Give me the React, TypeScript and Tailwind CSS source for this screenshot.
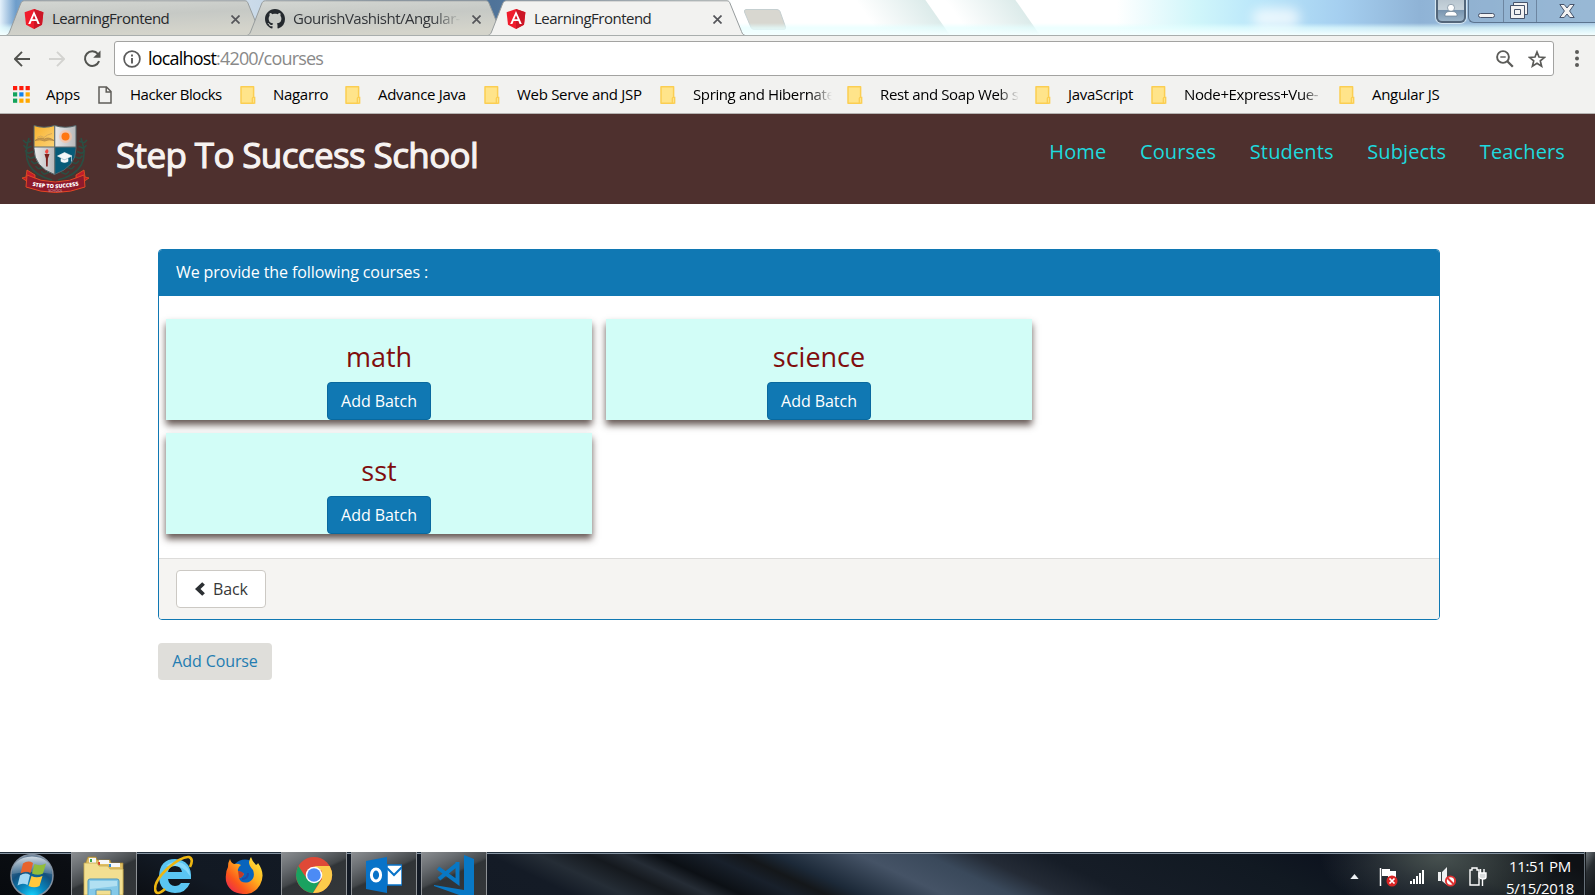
import React from "react";

const AngularIcon = () => (
  <svg className="h-5 w-5 shrink-0" viewBox="0 0 20 20">
    <path d="M10 0 19.4 3.3 18 15.8 10 20 2 15.8.6 3.3Z" fill="#f01c2c" />
    <path d="M10 0 19.4 3.3 18 15.8 10 20Z" fill="#cc1626" />
    <path d="M10 2 4.2 15h2.2l1.2-3h4.8l1.2 3h2.2Zm0 4.3 1.7 4H8.3Z" fill="#fff" fillRule="evenodd" />
  </svg>
);

const GithubIcon = () => (
  <svg className="h-5 w-5 shrink-0" viewBox="0 0 16 16" fill="#24292e">
    <path d="M8 0C3.58 0 0 3.58 0 8c0 3.54 2.29 6.53 5.47 7.59.4.07.55-.17.55-.38 0-.19-.01-.82-.01-1.49-2.01.37-2.53-.49-2.69-.94-.09-.23-.48-.94-.82-1.13-.28-.15-.68-.52-.01-.53.63-.01 1.08.58 1.23.82.72 1.21 1.87.87 2.33.66.07-.52.28-.87.51-1.07-1.78-.2-3.64-.89-3.64-3.95 0-.87.31-1.59.82-2.15-.08-.2-.36-1.02.08-2.12 0 0 .67-.21 2.2.82.64-.18 1.32-.27 2-.27s1.36.09 2 .27c1.53-1.04 2.2-.82 2.2-.82.44 1.1.16 1.92.08 2.12.51.56.82 1.27.82 2.15 0 3.07-1.87 3.75-3.65 3.95.29.25.54.73.54 1.48 0 1.07-.01 1.93-.01 2.2 0 .21.15.46.55.38A8.01 8.01 0 0 0 16 8c0-4.42-3.58-8-8-8Z" />
  </svg>
);

const CloseIcon = () => (
  <svg className="h-[9px] w-[9px] shrink-0" viewBox="0 0 9 9" stroke="#55565a" strokeWidth="1.7">
    <path d="M.5.5l8 8M8.5.5l-8 8" />
  </svg>
);

const FolderIcon = () => (
  <svg className="h-[18px] w-4 shrink-0" viewBox="0 0 16 18">
    <path d="M1 .8h12.6v16.4H1Z" fill="#ffe48a" stroke="#fbce52" strokeWidth="1.5" strokeLinejoin="round" />
    <path d="M12.3 17.2v-4.6q0-1.2 1.2-1.2h1.2v5.8Z" fill="#ffe48a" stroke="#fbce52" strokeWidth="1.3" />
  </svg>
);

const PageIcon = () => (
  <svg className="h-[18px] w-[14px] shrink-0" viewBox="0 0 14 18" fill="none" stroke="#5f5d58" strokeWidth="1.5">
    <path d="M1 1h7.5L13 5.5V17H1ZM8.2 1v5H13" />
  </svg>
);

const AppsIcon = () => (
  <svg className="h-[17px] w-[17px] shrink-0" viewBox="0 0 17 17">
    {["#ff1b0b", "#ff1b0b", "#ff1b0b", "#13a35c", "#1482ea", "#ffa800", "#13a35c", "#ffa800", "#ffa800"].map((c, i) => (
      <rect key={i} x={(i % 3) * 6.3} y={Math.floor(i / 3) * 6.3} width="4.2" height="4.2" fill={c} />
    ))}
  </svg>
);

function Tab({ title, active, github }: { title: string; active?: boolean; github?: boolean }) {
  return (
    <div className={active ? "relative z-10 h-9 w-[258px] shrink-0" : "relative h-9 w-[256px] shrink-0"}>
      <svg className="absolute inset-0 h-9 w-[258px]" viewBox="0 0 258 36">
        <defs>
          <linearGradient id="tabfill" x1="0" x2="0.3" y1="0" y2="1">
            <stop offset="0" stopColor="#d4d7d3" />
            <stop offset=".5" stopColor="#c6c9c5" />
            <stop offset="1" stopColor="#d4d4cb" />
          </linearGradient>
        </defs>
        <path
          d="M0 35.5C2 35 2.5 34 3.5 32L14.500 4C15.500 2 16 .8 18.500 .8H239C241 .8 241.500 2 242.300 4L253.500 31.500C254.500 34 255 35 257.500 35.500"
          fill={active ? "#f2f2f0" : "url(#tabfill)"}
          stroke="#979c9d"
        />
      </svg>
      <div className="relative flex h-[37px] items-center pl-[18px] pt-px">
        {github ? <GithubIcon /> : <AngularIcon />}
        <div
          className={
            github
              ? "-mt-0.5 ml-2 w-[171px] overflow-hidden whitespace-nowrap text-[15px] tracking-[-0.5px] text-[#33363a] [mask-image:linear-gradient(90deg,#000_82%,transparent_98%)]"
              : "-mt-0.5 ml-2 w-[171px] overflow-hidden whitespace-nowrap text-[15px] tracking-[-0.5px] text-[#26282b]"
          }
        >
          {title}
        </div>
        <div className="ml-[8px] flex">
          <CloseIcon />
        </div>
      </div>
    </div>
  );
}

function TitleBar() {
  return (
    <div className="relative flex h-9 overflow-hidden border-b border-[#a9aead] bg-[linear-gradient(90deg,#e4f1fb_0,#6d9dcb_1%,#a7b8c6_3%,#e8eef2_10%,#c7d8e8_16.5%,#4f7399_24%,#4f7399_31%,#6f8fb4_37%,#d7f0f3_43%,#fff_46%,#fff_70%,#d0f6fa_75%,#b9e6fa_79%,#a5cff0_84%,#8fb3d6_89%,#a9c9e4_100%)] pl-[6px]">
      <div className="absolute left-[868px] top-0 h-9 w-[70px] skew-x-[35deg] bg-linear-to-r from-transparent to-[#dcebea]" />
      <div className="absolute left-[958px] top-0 h-9 w-[70px] skew-x-[35deg] bg-linear-to-r from-transparent to-[#dcebea]" />
      <div className="absolute inset-x-0 bottom-0 h-3 bg-[linear-gradient(180deg,transparent,#e4ffffb0_40%,#f4ffff)]" />
      <div className="absolute left-[1252px] top-2 h-5 w-12 rounded-full bg-white/70 blur-[6px]" />
      <div className="-mr-[15px] flex">
        <div className="-mr-[15px] flex"><Tab title="LearningFrontend" /></div>
        <div className="flex"><Tab title="GourishVashisht/Angular-" github /></div>
      </div>
      <Tab title="LearningFrontend" active />
      <svg className="-ml-[3px] mt-[9px] h-[22px] w-[44px]" viewBox="0 0 44 22">
        <path d="M3 .5H34Q36 .5 37 2.500L42.500 18Q43 20.500 41 20.500H11Q9 20.500 8 18.500L1.500 3Q1 .5 3 .5Z" fill="#d8d7d0" stroke="#c5cfd0" />
      </svg>
      <div className="absolute right-0 top-0 flex">
        <div className="mr-[2px] flex h-[23px] w-[30px] items-center justify-center rounded-b-md border-2 border-t-0 border-[#53667a] bg-[linear-gradient(#b9c6d0_0,#c7d3db_45%,#7995b0_50%,#9bb4c8)] shadow-[0_0_1px_1px_#dcebf5]">
          <svg className="mb-0.5 h-[14px] w-[14px]" viewBox="0 0 14 14" fill="#fff" stroke="#6f8294" strokeWidth=".7">
            <path d="M1 13q-.5-4 4-4.500h4q4.500 .5 4 4.500Z" />
            <circle cx="7" cy="4.800" r="3.500" />
          </svg>
        </div>
        <div className="flex h-[23px] w-[127px] rounded-bl-md border-b border-l border-[#5c7590] bg-[#8eadcc]/60">
          <div className="flex w-[35px] items-start justify-center border-r border-[#6d86a1] pt-[13px]">
            <div className="h-[5px] w-[17px] rounded-sm border border-[#46536a] bg-[#f2f2f2]" />
          </div>
          <div className="flex w-[33px] justify-center border-r border-[#6d86a1] pt-[2px]">
            <svg className="-ml-[3px] h-[17px] w-[18px]" viewBox="0 0 18 17" fill="#f2f2f2" stroke="#46536a">
              <path d="M3.500 .5h14v12h-14Z" />
              <path d="M.5 3.500h14v13H.5ZM4.500 7.500v5h6v-5Z" fillRule="evenodd" />
            </svg>
          </div>
          <div className="flex flex-1 justify-center pt-[4px]">
            <svg className="ml-[2px] h-[14px] w-4" viewBox="0 0 16 14" fill="#f2f2f2" stroke="#46536a">
              <path d="M.8.5h4.400L8 4 10.800.5h4.400L10.600 7l4.600 6.500h-4.400L8 10l-2.800 3.500H.8L5.400 7Z" />
            </svg>
          </div>
        </div>
      </div>
    </div>
  );
}

function Toolbar() {
  return (
    <div className="flex h-[40px] items-center bg-[#f2f2f0] pt-[5px]">
      <svg className="ml-[14px] h-4 w-4" viewBox="0 0 16 16" fill="none" stroke="#52534f" strokeWidth="1.900">
        <path d="M8 .8.9 8 8 15.200M1 8h15" />
      </svg>
      <svg className="ml-[19px] h-4 w-4" viewBox="0 0 16 16" fill="none" stroke="#d3d3d0" strokeWidth="1.900">
        <path d="M8 .8 15.100 8 8 15.200M15 8H0" />
      </svg>
      <svg className="ml-[18px] h-[18px] w-[18px]" viewBox="0 0 18 18">
        <path d="M15 4A7.300 7.300 0 1 0 16.100 11.200" fill="none" stroke="#52534f" strokeWidth="2" />
        <path d="M17.500 .5v7.300h-7.300Z" fill="#52534f" />
      </svg>
      <div className="ml-[13px] flex h-[35px] w-[1440px] items-center rounded-[3px] border border-[#a3a3a1] bg-white pl-[9px]">
        <svg className="-ml-px h-[18px] w-[18px]" viewBox="0 0 18 18" fill="none" stroke="#5b5b5b" strokeWidth="1.700">
          <circle cx="9" cy="9" r="7.900" />
          <path d="M9 8v5.500M9 4.500v2" strokeWidth="1.900" />
        </svg>
        <div className="-mt-px ml-[7px] flex-1 whitespace-nowrap text-[18px] leading-[34px] tracking-[-0.82px] text-[#898989]">
          <span className="text-black">localhost</span>:4200/courses
        </div>
        <svg className="h-[18px] w-[18px]" viewBox="0 0 18 18" fill="none" stroke="#5b5b58" strokeWidth="1.900">
          <circle cx="7" cy="7" r="5.900" />
          <path d="m11.300 11.300 5.500 5.500" strokeWidth="2.300" />
          <path d="M4.300 7h5.400" strokeWidth="1.400" />
        </svg>
        <svg className="ml-[14px] mr-[7px] h-[18px] w-[18px]" viewBox="0 0 18 18" fill="none" stroke="#5b5b58" strokeWidth="1.700">
          <path d="m9 2 2 5 5.500.4-4.200 3.500 1.300 5.300L9 13.300l-4.600 2.900 1.300-5.300L1.500 7.400 7 7Z" />
        </svg>
      </div>
      <svg className="ml-[21px] h-[17px] w-1" viewBox="0 0 4 17" fill="#5b5b58">
        <circle cx="2" cy="2" r="2" />
        <circle cx="2" cy="8.500" r="2" />
        <circle cx="2" cy="15" r="2" />
      </svg>
    </div>
  );
}

const folders = [
  { name: "Nagarro", w: "w-[72px]" },
  { name: "Advance Java", w: "w-[106px]" },
  { name: "Web Serve and JSP", w: "w-[143px]" },
  { name: "Spring and Hibernate", w: "w-[154px]", fade: true },
  { name: "Rest and Soap Web s", w: "w-[155px]", fade: true },
  { name: "JavaScript", w: "w-[83px]" },
  { name: "Node+Express+Vue-", w: "w-[155px]", fade: true },
  { name: "Angular JS", w: "w-[100px]" },
];

function Bookmarks() {
  return (
    <div className="flex h-[38px] items-center whitespace-nowrap border-b border-[#b5b3b1] bg-[#f2f2f0] pl-[13px] text-[15px] tracking-[-0.3px] text-black">
      <AppsIcon />
      <div className="ml-4 w-[52px]">Apps</div>
      <PageIcon />
      <div className="ml-[18px] w-[110px] tracking-[-0.45px]">Hacker Blocks</div>
      {folders.map((f) => (
        <div key={f.name} className="flex items-center">
          <FolderIcon />
          <div className={"ml-[17px] " + f.w}>
            <div className={f.fade ? "w-[139px] overflow-hidden tracking-[-0.38px] [mask-image:linear-gradient(90deg,#000_85%,transparent_100%)]" : ""}>
              {f.name}
            </div>
          </div>
        </div>
      ))}
    </div>
  );
}

const leaves = [0, 1, 2, 3, 4, 5, 6];

const SchoolLogo = () => (
  <svg className="h-[68px] w-[68px]" viewBox="0 0 68 68">
    <defs>
      <linearGradient id="gold" x1="0" x2="1" y1="0" y2="1">
        <stop offset="0" stopColor="#f8b02c" />
        <stop offset="1" stopColor="#fbd377" />
      </linearGradient>
      <linearGradient id="silver" x1="0" x2="1">
        <stop offset="0" stopColor="#e9e9ea" />
        <stop offset="1" stopColor="#b7b8ba" />
      </linearGradient>
      <clipPath id="shield">
        <path d="M12 .5q10 3.500 20.500 0 11 3.500 21.500 0v23Q54 42 32.500 49.500 12 42 12 23.500Z" />
      </clipPath>
    </defs>
    <g fill="none" stroke="#2b4e43" strokeWidth="1.600">
      <path d="M7 13Q-4 46 30 55M59 13Q71 46 36 55" />
      {leaves.map((i) => (
        <g key={i}>
          <path d={`M${4 + i * i * 0.5} ${18 + i * 5.2}l-3-3m3 3 5-2`} />
          <path d={`M${62 - i * i * 0.5} ${18 + i * 5.2}l3-3m-3 3-5-2`} />
        </g>
      ))}
    </g>
    <g clipPath="url(#shield)">
      <path d="M12 0h21v22H12Z" fill="url(#gold)" />
      <path d="M33 0h21v22H33Z" fill="url(#silver)" />
      <path d="M12 22h21v28H12Z" fill="url(#silver)" />
      <path d="M33 22h21v28H33Z" fill="#075b78" />
      <path d="M12 22h42M32.700 0v50" stroke="#5f6d70" strokeWidth="1.200" />
    </g>
    <path d="M12 .5q10 3.500 20.500 0 11 3.500 21.500 0v23Q54 42 32.500 49.500 12 42 12 23.500Z" fill="none" stroke="#52656a" />
    <path d="M13 15.500q5-4 9.500-1.500 4-2.500 9.500 1.500-5-1.500-9.500.5-4.500-2-9.500-.5Z" fill="#c99a4c" stroke="#a98043" strokeWidth=".7" />
    <path d="M15 12.500q4-3 7 0 3-3 8-4" fill="none" stroke="#d3a65a" strokeWidth=".9" />
    <circle cx="43.500" cy="11.500" r="6.500" fill="#ffc09c" opacity=".6" />
    <circle cx="43.500" cy="11.500" r="4" fill="#ff7610" />
    <path d="M22.500 29h5l-1.600 4.500-.2 8h-1.600l-.2-8Z" fill="#79201d" />
    <path d="M25 29q-4-2 0-5 3 2 0 5" fill="#f24841" />
    <path d="m35.500 31 7-3.500 7.500 3.500-7.500 3.500Zm3.500 2.500v3q3.500 2 7 0v-3l-3.500 1.700Zm10.500-2v5" fill="#f4f7f8" stroke="#f4f7f8" strokeWidth=".6" />
    <path d="m5 45-1 7-4 1 6 4-1 5 8 1V50Zm57 0 1 7 4 1-6 4 1 5-8 1V50Z" fill="#c41d2a" stroke="#e9561f" strokeWidth=".8" />
    <path d="M5 50q28 14 57 0l1 12q-29 11-59 0Z" fill="#8e1a2c" stroke="#e44724" />
    <path id="ribbon" d="M9 60.500Q33 66 58 60" fill="none" />
    <text fill="#fff" fontFamily="Open Sans, sans-serif" fontWeight="800" fontSize="5.500">
      <textPath href="#ribbon" startOffset="50%" textAnchor="middle" textLength="47">STEP TO SUCCESS</textPath>
    </text>
    <text x="33.500" y="67.200" textAnchor="middle" fill="#d7b5b7" fontFamily="Open Sans, sans-serif" fontSize="3.600">SCHOOL</text>
  </svg>
);

function SchoolHeader() {
  return (
    <header className="flex h-[90px] bg-[#4e302e] pl-[22px] pr-[30px]">
      <div className="pt-[11px]"><SchoolLogo /></div>
      <h1 className="ml-[26px] flex-1 pt-[17px] text-[35px] leading-[48px] tracking-[-0.62px] text-[#f7f3f1] [-webkit-text-stroke:1.100px_#f7f3f1]">
        Step To Success School
      </h1>
      <nav className="flex gap-[33.500px] pt-[24px] text-[20px] leading-[27px] tracking-[0.14px] text-[#1ddade]">
        <a>Home</a>
        <a>Courses</a>
        <a>Students</a>
        <a>Subjects</a>
        <a>Teachers</a>
      </nav>
    </header>
  );
}

function CourseCard({ name }: { name: string }) {
  return (
    <div className="flex h-[101px] flex-col items-center bg-[#d2fdf7] pt-[18px] shadow-[0_5px_7px_#40302acc]">
      <div className="h-[45px] text-[27px] leading-[40px] text-[#800d0d]">{name}</div>
      <button className="h-[38px] w-[104px] shrink-0 rounded-[4px] border border-[#09699f] bg-[#1078b3] text-[16px] leading-[22px] tracking-[-0.05px] text-white">
        Add Batch
      </button>
    </div>
  );
}

function Courses() {
  return (
    <main className="flex-1 bg-white pl-[158px] pt-[45px]">
      <section className="h-[371px] w-[1282px] overflow-hidden rounded-[4px] border border-[#1078b3]">
        <div className="h-[46px] bg-[#1078b3] pl-[17px] pt-[11px] text-[16px] leading-[22px] tracking-[-0.1px] text-white">
          We provide the following courses :
        </div>
        <div className="grid h-[262px] grid-cols-[426px_426px] content-start gap-x-[14px] gap-y-[13px] pl-[7px] pt-[23px]">
          <CourseCard name="math" />
          <CourseCard name="science" />
          <CourseCard name="sst" />
        </div>
        <div className="h-[61px] border-t border-[#dddcda] bg-[#f5f4f2] pl-[17px] pt-[11px]">
          <button className="flex h-[38px] w-[90px] items-center rounded-[4px] border border-[#ccc9c4] bg-white pl-[18px] text-[16px] tracking-[-0.1px] text-[#383838]">
            <svg className="mr-[8px] h-[14px] w-[10px]" viewBox="0 0 10 14" fill="#2c3033">
              <path d="M7.200 .2 0 7l7.200 6.800L9.900 11.200 5.500 7 9.900 2.800Z" />
            </svg>
            Back
          </button>
        </div>
      </section>
      <button className="mt-[23px] h-[37px] w-[114px] rounded-[4px] bg-[#dfdeda] pb-[2px] text-[16px] leading-[22px] tracking-[-0.1px] text-[#237cb1]">
        Add Course
      </button>
    </main>
  );
}

const StartOrb = () => (
  <svg className="ml-[9px] mt-[1px] h-[44px] w-[46px]" viewBox="0 0 46 44">
    <defs>
      <radialGradient id="orb" cx=".5" cy="1" r="1">
        <stop offset="0" stopColor="#16d5ff" />
        <stop offset=".3" stopColor="#0888c0" />
        <stop offset=".6" stopColor="#12507e" />
        <stop offset="1" stopColor="#71859b" />
      </radialGradient>
      <linearGradient id="shine" x1="0" x2="0" y1="0" y2="1">
        <stop offset="0" stopColor="#e3eaf0" stopOpacity=".85" />
        <stop offset="1" stopColor="#8aa5ba" stopOpacity=".35" />
      </linearGradient>
    </defs>
    <circle cx="23" cy="22.500" r="21" fill="url(#orb)" stroke="#8290a0" strokeWidth="1.500" />
    <path d="M3 21Q4 4 23 3.500 42 4 43 21 23 17 3 21Z" fill="url(#shine)" />
    <path d="M14 10.500q5-3.500 10-.5l-2.500 10q-5-2.500-10 0.500Z" fill="#e8632c" />
    <path d="M25.500 11q5 2.500 11.500-.5l-3 10q-5 2.500-11 0Z" fill="#91bd3b" />
    <path d="M11 22.500q5-3.500 10-.5l-2.500 10q-5-2.500-10 0.500Z" fill="#a3d8f4" />
    <path d="M22.500 23q5 2.500 11 0l-3 10q-5 2.500-11 0Z" fill="#ffc83c" />
  </svg>
);

const ExplorerIcon = () => (
  <svg className="h-[42px] w-[42px]" viewBox="0 0 42 42">
    <path d="M3 7l2-5h8l1 3h13l1 3h12v30H3Z" fill="#dfbe62" stroke="#a58434" strokeWidth=".7" />
    <path d="M6 3h7v5H6Zm10 2h10v4H16Zm10 3h11v4H26Z" fill="#f7f8f8" />
    <path d="M7 4h2v3H7Z" fill="#3ba64a" />
    <path d="M15 7h2v3h-2Z" fill="#d84833" />
    <path d="M26 9h2v3h-2Z" fill="#3188cf" />
    <path d="M1 8h13l2 3h9l2 3h13v26H1Z" fill="#f2df91" stroke="#c5a951" strokeWidth=".8" />
    <path d="M5 42V26q0-2 2-2h27q2 0 2 2v16h-8v-7H13v7Z" fill="#84c9e8" stroke="#4d94b9" />
    <path d="M7 26h27v5L7 34Z" fill="#c4eaf6" opacity=".7" />
  </svg>
);

const IEIcon = () => (
  <svg className="h-[40px] w-[40px]" viewBox="0 0 40 40">
    <path d="M37 24H14q1 7 7 7 4 0 6-3h9q-4 10-15 10Q5 37 5 21 6 4 21 4q17 1 16 20ZM14 17h14q-1-6-7-6t-7 6Z" fill="#5ac5f2" />
    <path d="M12 11Q18 5 28 8q8 4 8 13-7-13-24-10Z" fill="#a3e8ff" opacity=".6" />
    <path d="M11 34Q2 42 1 34 1 25 14 13 28 1 35 2q5 2 1 10" fill="none" stroke="#edb611" strokeWidth="2.600" />
  </svg>
);

const FirefoxIcon = () => (
  <svg className="h-[37px] w-[38px]" viewBox="0 0 38 37">
    <defs>
      <linearGradient id="fox" x1="1" x2="0" y1="0" y2="1">
        <stop offset="0" stopColor="#fff143" />
        <stop offset=".4" stopColor="#ffb01e" />
        <stop offset=".7" stopColor="#fb561b" />
        <stop offset="1" stopColor="#e51764" />
      </linearGradient>
    </defs>
    <circle cx="20" cy="16" r="13.500" fill="#0864bd" />
    <path d="M5 2q1 4 4 5 4-1 7 1-4 3-3 6 4 1 6 3-2 4-5 4 2 6 10 4 7-4 4-12-4-4-4-8 1-4 2-5 1 4 5 8 2-1 2-2 8 11 2 22-6 10-17 9Q4 36 1 24 0 15 3 10q0-5 2-8Z" fill="url(#fox)" />
    <path d="M13 14q4 0 6 3-2 4-5 4" fill="#c23a2a" />
    <path d="M23 16q0 6-6 6" stroke="#2149a2" strokeWidth="2" fill="none" />
  </svg>
);

const ChromeIcon = () => (
  <svg className="h-[38px] w-[38px]" viewBox="0 0 38 38">
    <circle cx="19" cy="19" r="18" fill="#df4937" />
    <path d="M3.400 10A18 18 0 0 0 18 37l8-14-7 4-7-4Z" fill="#1aa260" />
    <path d="M18 37a18 18 0 0 0 16.600-27H19l8 5v8Z" fill="#fccb4b" />
    <circle cx="19" cy="19" r="8.300" fill="#fff" />
    <circle cx="19" cy="19" r="6.800" fill="#4c8bf5" />
  </svg>
);

const OutlookIcon = () => (
  <svg className="h-[36px] w-[36px]" viewBox="0 0 36 36">
    <path d="M0 4 21 0v36L0 32Z" fill="#0873c8" />
    <path d="M21 8h15v20H21Z" fill="#fff" stroke="#0873c8" strokeWidth="1.500" />
    <path d="m21 11 7 7 8-8" fill="none" stroke="#0873c8" strokeWidth="2" />
    <ellipse cx="10" cy="18" rx="4.600" ry="6" fill="none" stroke="#fff" strokeWidth="3" />
  </svg>
);

const CodeIcon = () => (
  <svg className="h-[41px] w-[40px]" viewBox="0 0 40 41">
    <path d="M30 0l10 4v37H28L0 31v-1l30 5Z" fill="#0878c5" />
    <path d="M23.500 7v20L4 13M23.500 9 5 24" fill="none" stroke="#0878c5" strokeWidth="4" />
  </svg>
);

function TaskButton({ running, children }: { running?: boolean; children: React.ReactNode }) {
  return (
    <div
      className={
        running
          ? "mr-[4px] flex h-[43px] w-[66px] justify-center border-x border-[#8e9296] bg-[linear-gradient(155deg,#8b8e91_0,#696d71_25%,#44484b_48%,#303437_52%,#34373a_100%)] pt-[3px]"
          : "mr-[4px] flex h-[43px] w-[66px] justify-center pt-[3px]"
      }
    >
      {children}
    </div>
  );
}

function Taskbar() {
  return (
    <footer className="flex h-[43px] overflow-hidden bg-[radial-gradient(ellipse_120px_60px_at_1440px_5px,#46504f,transparent),linear-gradient(25deg,#070a0e_0,#0b0e13_8%,#121923_14%,#141b26_34%,#252d36_37%,#15191e_40%,#252c35_42%,#0c1015_44%,#18202b_47%,#14171a_49%,#1c2938_51%,#455366_56%,#3a495b_60%,#242b36_63%,#161d27_67%,#111922_78%,#0b101d_86%,#1b2124_90%,#0e1115_97%)] shadow-[inset_0_1px_#23303c,inset_0_2px_#8492a0]">
      <div className="w-[71px]"><StartOrb /></div>
      <TaskButton running><ExplorerIcon /></TaskButton>
      <TaskButton><IEIcon /></TaskButton>
      <TaskButton><div className="pt-[2px]"><FirefoxIcon /></div></TaskButton>
      <TaskButton running><div className="pt-[1px]"><ChromeIcon /></div></TaskButton>
      <TaskButton running><div className="pt-[2px]"><OutlookIcon /></div></TaskButton>
      <TaskButton running><CodeIcon /></TaskButton>
      <div className="flex-1" />
      <svg className="mt-[22px] h-[5px] w-[9px]" viewBox="0 0 10 6"><path d="M5 0l5 6H0Z" fill="#edf0f3" /></svg>
      <svg className="ml-[20px] mt-[15px] h-[20px] w-[19px]" viewBox="0 0 19 20">
        <path d="M1.500 1v18" stroke="#fff" strokeWidth="1.500" />
        <path d="M3 2h8v2h6v7H9V9H3Z" fill="#fff" />
        <circle cx="13" cy="14" r="5.500" fill="#d92424" />
        <path d="m10.500 11.500 5 5m0-5-5 5" stroke="#fff" strokeWidth="1.700" />
      </svg>
      <svg className="ml-[12px] mt-[18px] h-[14px] w-[15px]" viewBox="0 0 15 14" fill="#fff">
        <path d="M0 11h2v3H0Zm3-2h2v5H3Zm3-3h2v8H6Zm3-3h2v11H9Zm3-3h2v14h-2Z" />
      </svg>
      <svg className="ml-[13px] mt-[15px] h-[20px] w-[18px]" viewBox="0 0 18 20">
        <path d="M0 5h3v9H0Zm4 0 5-5v18l-5-4Z" fill="#eef0f1" />
        <circle cx="12.500" cy="14" r="4.600" fill="#fff" stroke="#e03131" strokeWidth="1.900" />
        <path d="m9.500 11 6 6" stroke="#e03131" strokeWidth="1.900" />
      </svg>
      <svg className="ml-[12px] mt-[15px] h-[20px] w-[19px]" viewBox="0 0 19 20" fill="none" stroke="#fff" strokeWidth="1.400">
        <path d="M4 3V1h5v2h2v15H2V3Z" />
        <path d="M11 6h7v4q0 2-3 2t-4-2ZM12.500 6V2M16 6V2M14.500 12v7" fill="#d9dcdd" />
      </svg>
      <div className="ml-[13px] w-[80px] whitespace-nowrap pt-[3px] text-center text-[15px] leading-[22px] tracking-[-0.35px] text-white">
        <div>11:51 PM</div>
        <div>5/15/2018</div>
      </div>
      <div className="ml-[4px] w-[11px] border-l border-[#67717a] bg-[linear-gradient(120deg,#777e83_0,#292e32_40%,#111416)] shadow-[inset_1px_0_#15191c]" />
    </footer>
  );
}

export default function App() {
  return (
    <div className="flex h-[895px] w-[1595px] flex-col overflow-hidden bg-white font-['Open_Sans',sans-serif]">
      <TitleBar />
      <Toolbar />
      <Bookmarks />
      <SchoolHeader />
      <Courses />
      <Taskbar />
    </div>
  );
}
